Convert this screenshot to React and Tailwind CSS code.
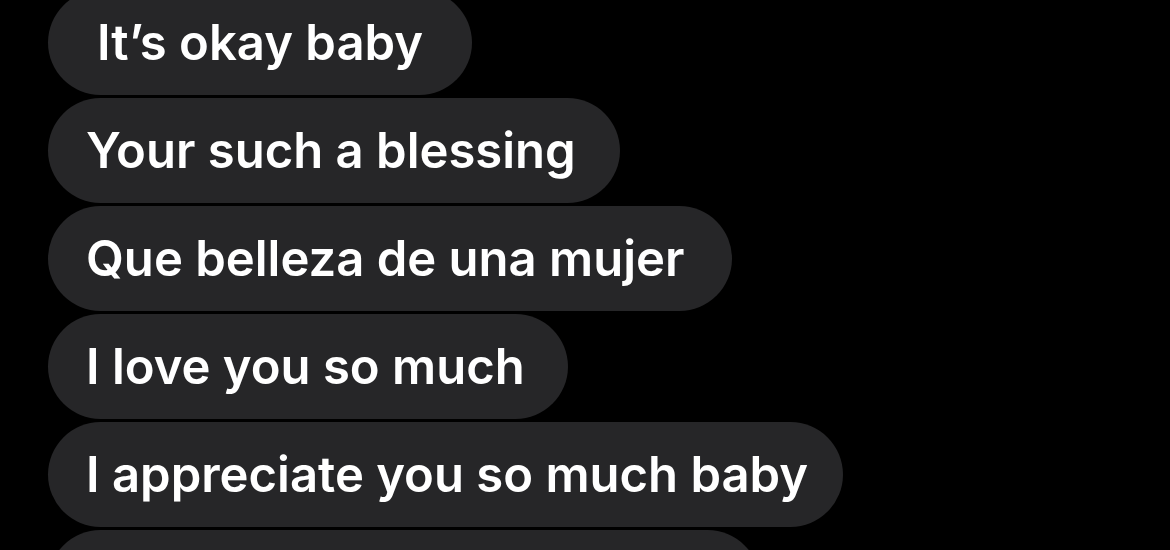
export default function App() {
  const msgs = [
    { t: "It’s okay baby", w: "w-[424px]", pl: "pl-[49px]" },
    { t: "Your such a blessing", w: "w-[572px]", pl: "pl-[38px]" },
    { t: "Que belleza de una mujer", w: "w-[684px]", pl: "pl-[38px]" },
    { t: "I love you so much", w: "w-[520px]", pl: "pl-[38px]" },
    { t: "I appreciate you so much baby", w: "w-[795px]", pl: "pl-[38px]" },
    { t: "", w: "w-[712px]", pl: "pl-[38px]" },
  ];
  return (
    <div className="w-[1170px] h-[550px] bg-black overflow-hidden">
      <div className="flex flex-col gap-[3px] -mt-[10px] pl-[48px]">
        {msgs.map((m, i) => (
          <div
            key={i}
            className={`${m.w} ${m.pl} h-[105px] shrink-0 rounded-full bg-[#262628] flex items-center text-white text-[49px] font-semibold whitespace-nowrap`}
            style={{ fontFamily: "Inter, 'Noto Sans', sans-serif" }}
          >
            {m.t}
          </div>
        ))}
      </div>
    </div>
  );
}
